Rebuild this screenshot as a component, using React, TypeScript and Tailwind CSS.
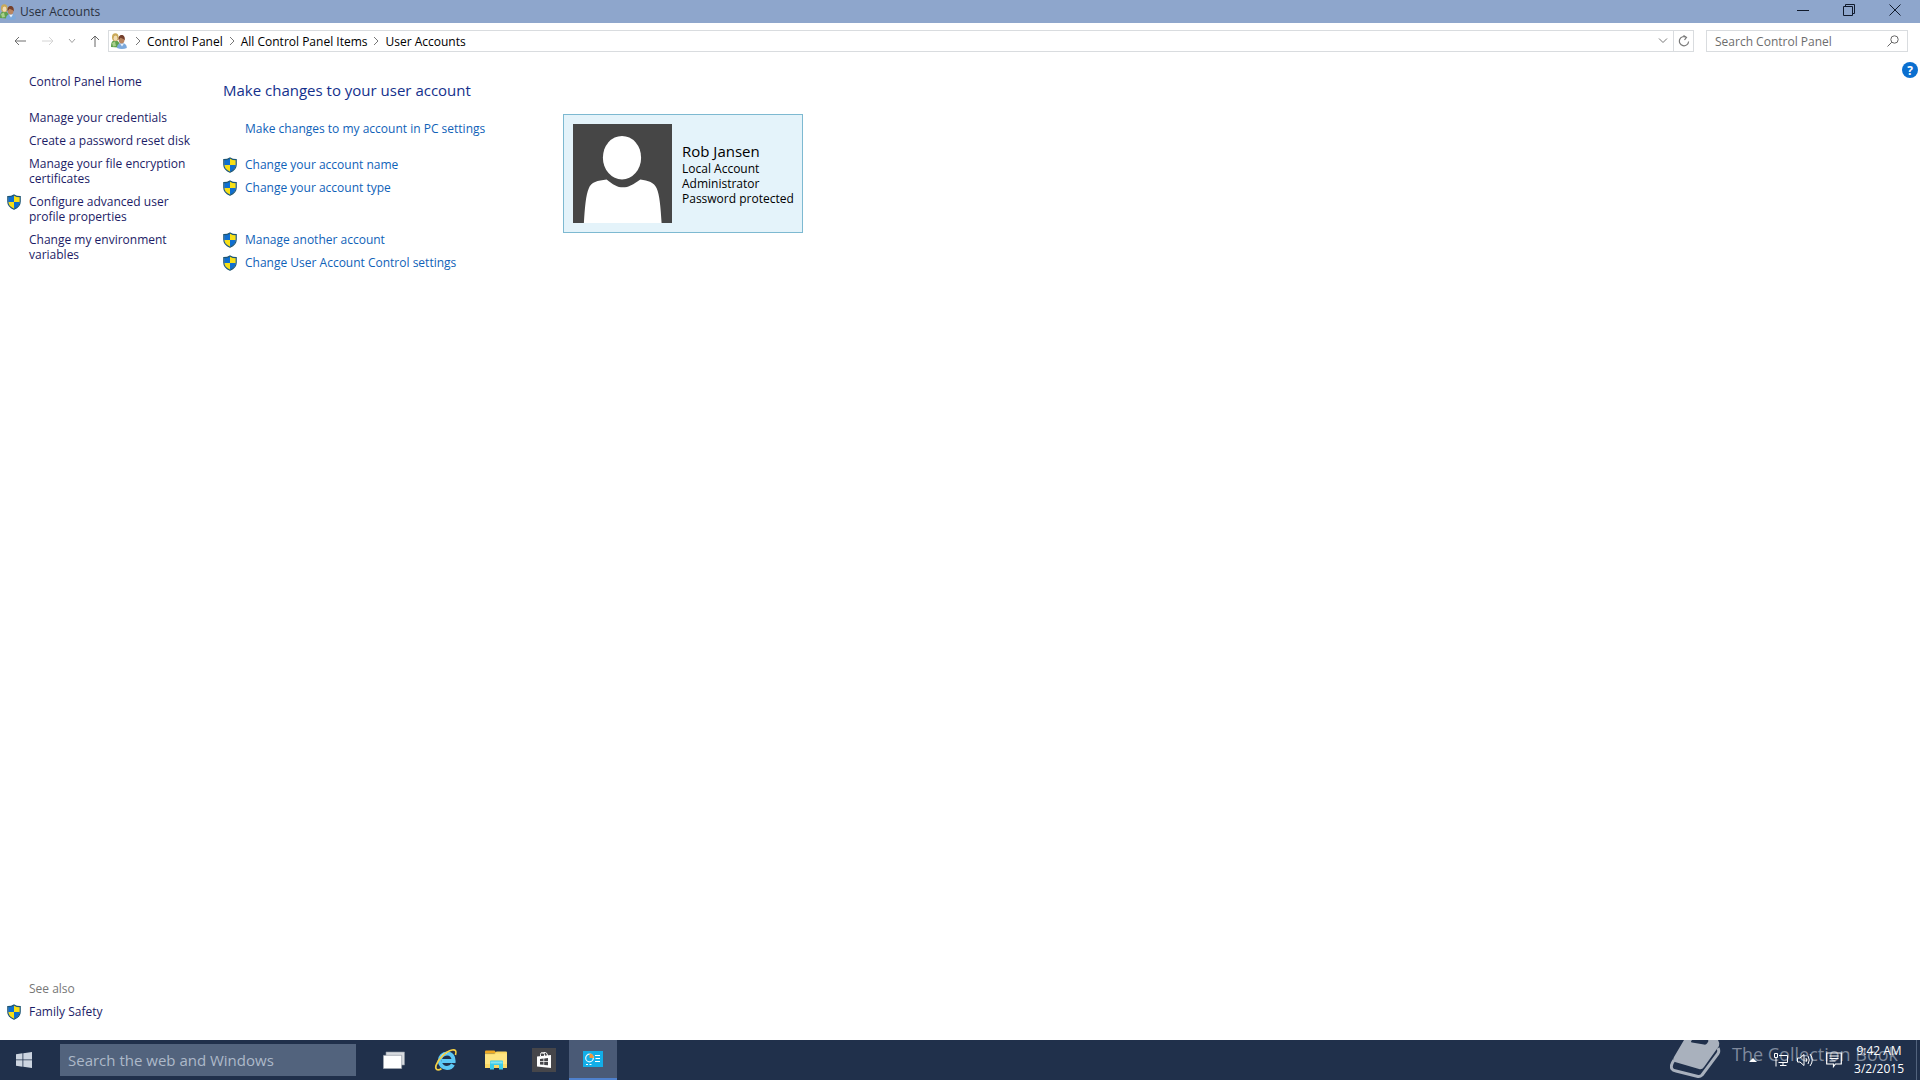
import type { ReactNode } from "react";

function Shield() {
  return (
    <svg viewBox="0 0 14 16" className="h-4 w-3.5 shrink-0" aria-hidden="true">
      <defs>
        <clipPath id="shield-shape">
          <path d="M7 1C5.200 2.300 3.300 2.800 1.200 2.800V7.500C1.200 11 3.600 13.500 7 15C10.400 13.500 12.800 11 12.800 7.500V2.800C10.700 2.800 8.800 2.300 7 1Z" />
        </clipPath>
      </defs>
      <g clipPath="url(#shield-shape)">
        <path fill="#0f6fd0" d="M0 0H7V8H0ZM7 8H14V16H7Z" />
        <path fill="#f8e016" d="M7 0H14V8H7ZM0 8H7V16H0Z" />
      </g>
      <path
        d="M7 .9C5.200 2.200 3.200 2.700.8 2.700V7.500C.8 11.200 3.500 13.800 7 15.300C10.500 13.800 13.200 11.200 13.200 7.500V2.700C10.800 2.700 8.800 2.200 7 .9Z"
        fill="none"
        stroke="#1d5573"
        strokeWidth="1.200"
      />
    </svg>
  );
}

function UsersIcon() {
  return (
    <svg viewBox="0 0 16 16" className="size-4 shrink-0" aria-hidden="true">
      <path d="M0 14C0 9.500 1 7.500 4 7.500S9 9.500 9 13L7 14.500Z" fill="#5fa04e" />
      <path d="M1 10L4 8.500L5 13L2 13.500Z" fill="#a9d08c" />
      <ellipse cx="4.300" cy="4.300" rx="3.300" ry="4" fill="#c9a95a" />
      <ellipse cx="4.500" cy="5.200" rx="1.900" ry="2.600" fill="#f1dcb4" />
      <path d="M6 15C6 11.500 8 10 10.800 10S15.800 11.500 15.800 15C13 16.200 9 16.200 6 15Z" fill="#7ba9dc" />
      <path d="M9 10.500L11 13.500L13 10.500Z" fill="#e9f1fb" />
      <ellipse cx="10.600" cy="6.500" rx="2.900" ry="3.900" fill="#b98560" />
      <path d="M7.700 7C7 3.500 8.700 1.900 10.800 1.900S14.200 4 13.700 7.500C12.800 5.700 11 5.500 9.500 4.800Z" fill="#743f2c" />
    </svg>
  );
}

function Crumb({ children }: { children: ReactNode }) {
  return (
    <>
      <svg viewBox="0 0 6 10" className="h-2.5 w-1.5 shrink-0" fill="none" stroke="#777" aria-hidden="true">
        <path d="M1 1L5 5L1 9" />
      </svg>
      <a href="#" className="mx-1.5 whitespace-nowrap text-black">
        {children}
      </a>
    </>
  );
}

function SideLink({ shield, children }: { shield?: boolean; children: ReactNode }) {
  return (
    <li className="flex items-start gap-2">
      <span className="w-3.5 shrink-0">{shield && <Shield />}</span>
      <a href="#" className="w-[170px] text-[#1c1c66]">
        {children}
      </a>
    </li>
  );
}

function TaskLink({ shield, children }: { shield?: boolean; children: ReactNode }) {
  return (
    <li className="flex min-h-4 items-start gap-2">
      <span className="w-3.5 shrink-0">{shield && <Shield />}</span>
      <a href="#" className="whitespace-nowrap text-[#0f62b8]">
        {children}
      </a>
    </li>
  );
}

function TitleBar() {
  return (
    <header className="flex h-[23px] items-center justify-between bg-[#8ea6cc] text-[#2a3140]">
      <div className="flex items-center gap-1">
        <UsersIcon />
        <h1>User Accounts</h1>
      </div>
      <div className="flex h-full items-start pr-0.5 text-[#101a2c]">
        <button aria-label="Minimize" className="flex h-5 w-[46px] items-center justify-center">
          <svg viewBox="0 0 12 12" className="size-3" stroke="currentColor" fill="none">
            <path d="M0 6.500H12" />
          </svg>
        </button>
        <button aria-label="Restore" className="flex h-5 w-[46px] items-center justify-center">
          <svg viewBox="0 0 12 12" className="size-3" stroke="currentColor" fill="none">
            <path d="M.5 2.500H9.500V11.500H.5ZM2.500 2.500V.5H11.500V9.500H9.500" />
          </svg>
        </button>
        <button aria-label="Close" className="flex h-5 w-[46px] items-center justify-center">
          <svg viewBox="0 0 12 12" className="size-3" stroke="currentColor" fill="none">
            <path d="M.5.5L11.500 11.500M11.500.5L.5 11.500" />
          </svg>
        </button>
      </div>
    </header>
  );
}

function NavBar() {
  return (
    <nav className="flex items-center pt-[7px] pr-3 pl-3.5">
      <button aria-label="Back" className="mr-4 text-[#6f6f6f]">
        <svg viewBox="0 0 12 10" className="h-2.5 w-3" fill="none" stroke="currentColor">
          <path d="M12 5H1M5 1L1 5L5 9" />
        </svg>
      </button>
      <button aria-label="Forward" className="mr-3.5 text-[#d4d4d4]">
        <svg viewBox="0 0 12 10" className="h-2.5 w-3" fill="none" stroke="currentColor">
          <path d="M0 5H11M7 1L11 5L7 9" />
        </svg>
      </button>
      <button aria-label="Recent locations" className="mr-3.5 text-[#a0a0a0]">
        <svg viewBox="0 0 8 6" className="h-1.5 w-2" fill="none" stroke="currentColor">
          <path d="M1 1L4 4.500L7 1" />
        </svg>
      </button>
      <button aria-label="Up" className="mr-2 text-[#666]">
        <svg viewBox="0 0 10 12" className="h-3 w-2.5" fill="none" stroke="currentColor">
          <path d="M5 12V1M1 5L5 1L9 5" />
        </svg>
      </button>
      <div className="flex h-[22px] flex-1 items-center border border-[#d9dcdf] pl-0.5">
        <UsersIcon />
        <div className="flex flex-1 items-center pl-2">
          <Crumb>Control Panel</Crumb>
          <Crumb>All Control Panel Items</Crumb>
          <Crumb>User Accounts</Crumb>
        </div>
        <button aria-label="Previous locations" className="flex h-full w-5 items-center justify-center text-[#777]">
          <svg viewBox="0 0 10 6" className="h-1.5 w-2.5" fill="none" stroke="currentColor">
            <path d="M1 .5L5 4.500L9 .5" />
          </svg>
        </button>
        <button
          aria-label="Refresh"
          className="flex h-full w-5 items-center justify-center border-l border-[#d9dcdf] text-[#777]"
        >
          <svg viewBox="0 0 12 12" className="size-3" fill="none" stroke="currentColor" strokeWidth="1.200">
            <path d="M8.500 2.300A4.600 4.600 0 1 0 10.600 6.500M5.500.5L8.500 2.300L6.500 5" />
          </svg>
        </button>
      </div>
      <div className="ml-3 flex h-[22px] w-[202px] items-center border border-[#d9dcdf] pr-2 pl-2">
        <input
          type="text"
          aria-label="Search Control Panel"
          placeholder="Search Control Panel"
          className="min-w-0 flex-1 outline-none placeholder:text-[#6d6d6d]"
        />
        <svg viewBox="0 0 12 12" className="size-3" fill="none" stroke="#666" aria-hidden="true">
          <circle cx="7.500" cy="4.500" r="3.700" />
          <path d="M4.800 7.200L.5 11.500" />
        </svg>
      </div>
    </nav>
  );
}

function AccountCard() {
  return (
    <section className="flex w-60 items-center gap-2.5 self-start border border-[#7db9d1] bg-[#e4f3fa] py-[9px] pl-[9px] text-black">
      <svg viewBox="0 0 100 100" className="size-[99px] shrink-0" role="img" aria-label="Account picture">
        <path fill="#464646" d="M0 0H100V100H0Z" />
        <ellipse cx="49.500" cy="34" rx="19.300" ry="22" fill="#fff" />
        <path
          fill="#fff"
          d="M11 100C12 84 13 72 16 65C18 58.500 25 57 34 56C40 61 45 64 50.500 64C56 64 61 61 68 56C76 57.500 82 58.500 84.500 65C87.500 72 88.500 84 89.500 100Z"
        />
      </svg>
      <div>
        <h3 className="text-[15px] leading-[19px]">Rob Jansen</h3>
        <p>Local Account</p>
        <p>Administrator</p>
        <p>Password protected</p>
      </div>
    </section>
  );
}

function Taskbar() {
  return (
    <footer className="relative flex h-10 items-center bg-[#20304b]">
      <button aria-label="Start" className="flex h-full w-[60px] items-center pl-4">
        <svg viewBox="0 0 16 16" className="size-4" fill="#ccd4e0">
          <path d="M0 2.300L6.500 1.300V7.500H0ZM7.300 1.200L16 0V7.500H7.300ZM0 8.300H6.500V14.700L0 13.700ZM7.300 8.300H16V16L7.300 14.800Z" />
        </svg>
      </button>
      <input
        type="text"
        aria-label="Search the web and Windows"
        placeholder="Search the web and Windows"
        className="h-8 w-[296px] bg-[#52637d] px-2 text-[15px] text-white outline-none placeholder:text-[#adb9c9]"
      />
      <div className="flex h-full pl-3.5">
        <button aria-label="Task View" className="flex w-12 items-center justify-center">
          <svg viewBox="0 0 22 18" className="h-[18px] w-[22px]">
            <path d="M3 1H21.500V14H3Z" fill="#d8dbe0" stroke="#8c93a0" strokeWidth=".6" />
            <path d="M.3 4.300H18.700V17.700H.3Z" fill="#fff" stroke="#7d8694" strokeWidth=".6" />
          </svg>
        </button>
        <button aria-label="Internet Explorer" className="flex w-14 items-center justify-center">
          <svg viewBox="0 0 24 24" className="size-6" fill="none">
            <path
              d="M19 16.500C17.800 18.700 15.500 20 13 20A7.200 7.200 0 0 1 13 5.500C17.500 5.500 19.800 8.800 19.600 13H8"
              stroke="#5cc8f5"
              strokeWidth="4"
            />
            <path d="M6.800 10C8 7.300 10 5.300 13 5.200" stroke="#c4f0ff" strokeWidth="1.300" />
            <path
              d="M21.500 7C22.800 3 21.500 1.200 18 2C12 3.400 4 11 2 17.500C1 21.500 3.200 23 7.500 20.700"
              stroke="#f3cf45"
              strokeWidth="1.700"
            />
          </svg>
        </button>
        <button aria-label="File Explorer" className="flex w-11 items-center justify-center">
          <svg viewBox="0 0 22 20" className="h-5 w-[22px]">
            <path d="M0 1.500Q0 .5 1 .5H9.500L12 3.500H0Z" fill="#f0a821" />
            <path d="M0 3.500H9.500L11.500 1.500H21Q22 1.500 22 2.500V18H0Z" fill="#fbd965" />
            <path d="M0 4.500H10L11 3.500H22V14H0Z" fill="#ffe582" />
            <path d="M5 19.500V11.500Q5 10.500 6 10.500H17Q18 10.500 18 11.500V19.500H14V15H9V19.500Z" fill="#3ccbe8" />
            <path d="M5.500 13.500H17.500V11.500H5.500Z" fill="#84e4f2" />
          </svg>
        </button>
        <button aria-label="Store" className="flex w-[51px] items-center justify-center">
          <svg viewBox="0 0 24 24" className="size-6">
            <path fill="#46464a" d="M0 0H24V24H0Z" />
            <path d="M8.500 8V6.500Q8.500 4.500 10.500 4.500T12.500 6.500V8M10.500 6Q11.500 4 13.500 4.500T15.500 8" fill="none" stroke="#fff" />
            <path d="M5 8.500L19 7V20L5 18.500Z" fill="#fff" />
            <path d="M8 11L11.500 10.600V13.300H8ZM12.200 10.500L16 10V13.300H12.200ZM8 14H11.500V16.800L8 16.400ZM12.200 14H16V17.300L12.200 16.900Z" fill="#46464a" />
          </svg>
        </button>
        <button
          aria-label="Control Panel"
          className="flex w-12 items-center justify-center border-b-2 border-[#4f81cd] bg-[#4a5a76]"
        >
          <svg viewBox="0 0 20 16" className="h-4 w-5">
            <path fill="#12aee8" d="M0 0H20V16H0Z" />
            <circle cx="6.500" cy="7" r="3.800" fill="none" stroke="#e9f7fd" strokeWidth="1.200" />
            <path d="M6.500 7V2.500A4.500 4.500 0 0 1 10.800 7Z" fill="#f2973d" />
            <path d="M12 4.500H17M12.500 7.500H17M12 10.500H17M3 13.500H5M6.500 13.500H8.500" stroke="#fff" strokeWidth="1.200" />
          </svg>
        </button>
      </div>

      <div className="absolute inset-y-0 right-[22px] flex items-start overflow-hidden text-[#7f8a9d]">
        <svg viewBox="0 0 52 40" className="h-10 w-[52px]" aria-hidden="true">
          <path fill="#a9b1bd" d="M14 0H48Q50 3 49 6L34 27Q32 30 29 29L5 22Q2 21 4 17Z" />
          <path
            fill="none"
            stroke="#a9b1bd"
            strokeWidth="3"
            strokeLinejoin="round"
            d="M4 20Q0 26 2 29Q3 30.500 6 31L28 36.500Q30 37 32 35L48 13.500Q49.500 11 48 8"
          />
          <path fill="#20304b" d="M22 0H38Q39 1 37 3.500Q36 5 34 4.500L22 2.500Q20 2 22 0Z" />
        </svg>
        <span className="ml-2.5 pt-0.5 text-[18px] leading-6 whitespace-nowrap">The Collection Book</span>
      </div>

      <div className="relative ml-auto flex h-full items-center text-white">
        <button aria-label="Show hidden icons" className="mr-4">
          <svg viewBox="0 0 8 4" className="h-1 w-2" fill="currentColor">
            <path d="M0 4L4 0L8 4Z" />
          </svg>
        </button>
        <button aria-label="Network" className="mr-2">
          <svg viewBox="0 0 16 14" className="h-3.5 w-4" fill="none" stroke="currentColor">
            <path d="M6 2.500H14.500V9.500H5.500M10 9.500V12.500M7 12.500H13.500M1.500.5H4.500V4.500H1.500ZM3 4.500V13.500" />
          </svg>
        </button>
        <button aria-label="Volume" className="mr-3">
          <svg viewBox="0 0 17 14" className="h-3.5 w-[17px]" fill="none" stroke="currentColor">
            <path d="M.5 5H3L7 1.500V12.500L3 9H.5ZM9 5Q10 7 9 9M11 3Q13.500 7 11 11M13 1Q17.500 7 13 13" />
          </svg>
        </button>
        <button aria-label="Notifications" className="mr-3">
          <svg viewBox="0 0 16 16" className="size-4" fill="none" stroke="currentColor" strokeWidth="1.200">
            <path d="M.7 1H15.300V12H9.500L7.500 14.500V12H.7ZM3.500 4H12.500M3.500 6.500H12.500M3.500 9H9.500" />
          </svg>
        </button>
        <time className="mr-3 text-center leading-[18px]">
          9:42 AM
          <br />
          3/2/2015
        </time>
        <button aria-label="Show desktop" className="h-full w-1 border-l border-[#52637d]" />
      </div>
    </footer>
  );
}

export default function App() {
  return (
    <div className="flex min-h-screen flex-col bg-white font-['Open_Sans','Noto_Sans',sans-serif] text-[12px] leading-[15px]">
      <TitleBar />
      <NavBar />
      <div className="flex flex-1">
        <aside className="flex w-[223px] shrink-0 flex-col justify-between pt-[22px] pb-5 pl-[7px]">
          <ul className="flex flex-col gap-2">
            <SideLink>Control Panel Home</SideLink>
            <li className="h-[5px]" aria-hidden="true" />
            <SideLink>Manage your credentials</SideLink>
            <SideLink>Create a password reset disk</SideLink>
            <SideLink>Manage your file encryption certificates</SideLink>
            <SideLink shield>Configure advanced user profile properties</SideLink>
            <SideLink>Change my environment variables</SideLink>
          </ul>
          <div>
            <h2 className="mb-2 ml-[22px] text-[#777]">See also</h2>
            <ul>
              <SideLink shield>Family Safety</SideLink>
            </ul>
          </div>
        </aside>
        <main className="flex-1 pt-7">
          <h2 className="text-[15px] leading-5 text-[#14308c]">Make changes to your user account</h2>
          <div className="flex">
            <ul className="flex w-[340px] flex-col gap-[7px] pt-[21px]">
              <TaskLink>Make changes to my account in PC settings</TaskLink>
              <li className="h-1.5" aria-hidden="true" />
              <TaskLink shield>Change your account name</TaskLink>
              <TaskLink shield>Change your account type</TaskLink>
              <li className="h-[22px]" aria-hidden="true" />
              <TaskLink shield>Manage another account</TaskLink>
              <TaskLink shield>Change User Account Control settings</TaskLink>
            </ul>
            <div className="mt-3.5 flex">
              <AccountCard />
            </div>
          </div>
        </main>
        <div className="pt-2.5 pr-0.5">
          <button
            aria-label="Help"
            className="flex size-4 items-center justify-center rounded-full bg-[#0a6fd0] font-bold text-white"
          >
            ?
          </button>
        </div>
      </div>
      <Taskbar />
    </div>
  );
}
